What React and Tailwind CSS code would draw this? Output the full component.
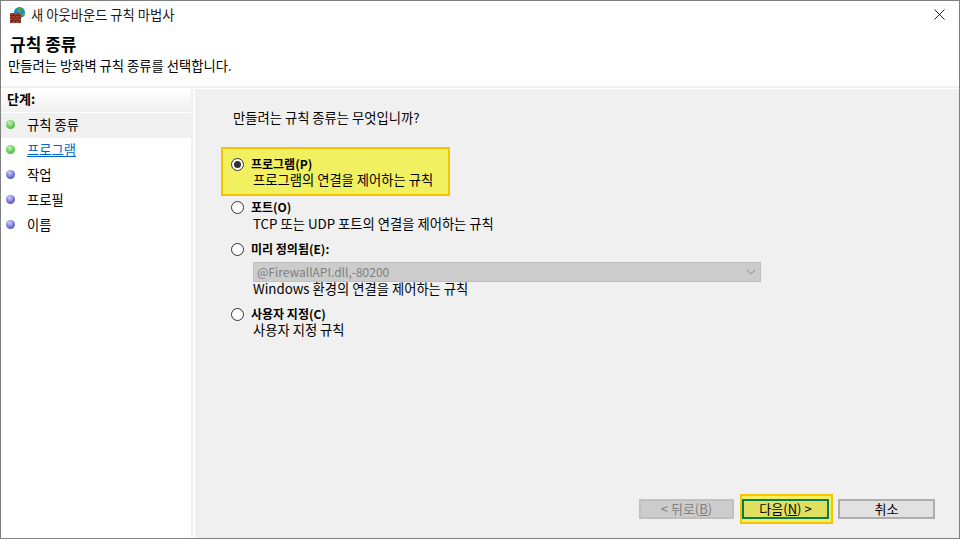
const font = { fontFamily: '"Noto Sans CJK KR", "Noto Sans", sans-serif' };

function FirewallIcon() {
  return (
    <svg width="16" height="16" viewBox="0 0 16 16" className="shrink-0">
      <circle cx="9.5" cy="5.5" r="5.5" fill="#2f7fd6" />
      <path d="M6.5 1.5 L10.5 0.5 L12.5 3 L10 6 L7.5 4.5 Z" fill="#3fae3a" />
      <path d="M12.5 6 L15 5 L14.5 9 L12.5 9.5 Z" fill="#3fae3a" />
      <rect x="0" y="6" width="11" height="10" fill="#a8432f" />
      <path d="M0 8.5 H11 M0 11 H11 M0 13.5 H11 M3.5 6 V8.5 M7.5 6 V8.5 M1.5 8.5 V11 M5.5 8.5 V11 M9.5 8.5 V11 M3.5 11 V13.5 M7.5 11 V13.5 M1.5 13.5 V16 M5.5 13.5 V16 M9.5 13.5 V16" stroke="#6e2a1d" strokeWidth="1" fill="none" />
    </svg>
  );
}

function StepDot({ done }) {
  return (
    <span
      className={
        done
          ? "h-[9px] w-[9px] shrink-0 rounded-full bg-[radial-gradient(circle_at_40%_30%,#c8f0c0,#5cc84a_60%,#48a83a)]"
          : "h-[9px] w-[9px] shrink-0 rounded-full bg-[radial-gradient(circle_at_40%_30%,#d0d0f4,#6868d0_60%,#5454b4)]"
      }
    />
  );
}

function Step({ label, done, active, link }) {
  return (
    <div className={`flex h-[25px] items-center pb-[2px] pl-[5px] ${active ? "bg-[#f0f0f0]" : ""}`}>
      <StepDot done={done} />
      <span className={`ml-[12px] text-[13.3px] ${link ? "text-[#0066cc] underline" : "text-black"}`}>{label}</span>
    </div>
  );
}

function Radio({ checked }) {
  return (
    <span className="flex h-[13px] w-[13px] shrink-0 items-center justify-center rounded-full border border-[#333] bg-white">
      {checked && <span className="h-[7px] w-[7px] rounded-full bg-[#333]" />}
    </span>
  );
}

function OptionLabel({ checked, children }) {
  return (
    <div className="flex h-[14px] items-center gap-[7px]">
      <Radio checked={checked} />
      <span className="text-[12px] font-bold leading-[14px] text-black">{children}</span>
    </div>
  );
}

function Button({ children, kind }) {
  if (kind === "next") {
    return (
      <div className="ml-[6px] flex h-[30px] w-[93px] items-center border-2 border-[#f5c400] bg-[#f0f060]">
        <button className="h-[20px] w-[87px] border-2 border-[#0a7a50] bg-[#e0e060] text-[13px] leading-[14px] text-black">
          {children}
        </button>
      </div>
    );
  }
  if (kind === "disabled") {
    return (
      <button className="h-[20px] w-[95px] border-2 border-[#c0c0c0] bg-[#cccccc] text-[13px] leading-[14px] text-[#808080]">
        {children}
      </button>
    );
  }
  return (
    <button className="ml-[5px] h-[20px] w-[97px] border-2 border-[#adadad] bg-[#e1e1e1] text-[13px] leading-[14px] text-black">
      {children}
    </button>
  );
}

export default function App() {
  return (
    <div
      className="flex h-[539px] w-[960px] flex-col overflow-hidden border border-[#808080] bg-white"
      style={font}
    >
      <div className="flex h-[29px] shrink-0 items-center pb-[2px] pl-[9px] pr-[14px]">
        <FirewallIcon />
        <span className="ml-[5px] text-[13.3px] text-[#1a1a1a]">새 아웃바운드 규칙 마법사</span>
        <svg width="11" height="11" viewBox="0 0 11 11" className="ml-auto">
          <path d="M0.5 0.5 L10.5 10.5 M10.5 0.5 L0.5 10.5" stroke="#222" strokeWidth="1" />
        </svg>
      </div>

      <div className="h-[56px] shrink-0 pl-[9px]">
        <div className="mt-[3px] text-[17px] font-bold leading-[22px] text-black">규칙 종류</div>
        <div className="-ml-[2px] mt-[3px] text-[13.3px] leading-[16px] text-black">만들려는 방화벽 규칙 종류를 선택합니다.</div>
      </div>

      <div className="flex min-h-0 flex-1 border-t-2 border-[#f0f0f0] pt-[1px]">
        <div className="w-[192px] shrink-0 border-r-2 border-[#f0f0f0]">
          <div className="flex h-[23px] items-center bg-gradient-to-b from-white to-[#f0f0f0] pb-[4px] pl-[6px] text-[13px] font-bold text-black">
            단계:
          </div>
          <div className="pt-[1px]">
            <Step label="규칙 종류" done active />
            <Step label="프로그램" done link />
            <Step label="작업" />
            <Step label="프로필" />
            <Step label="이름" />
          </div>
        </div>

        <div className="ml-[2px] flex min-w-0 flex-1 flex-col bg-[#f0f0f0] pl-[26px] pr-[24px]">
          <div className="ml-[12px] mt-[21px] text-[13.3px] leading-[16px] text-black">만들려는 규칙 종류는 무엇입니까?</div>

          <div className="mt-[21px] h-[49px] w-[229px] border-2 border-[#f5c400] bg-[#f0f060] pl-[8px] pt-[8px]">
            <OptionLabel checked>프로그램(P)</OptionLabel>
            <div className="ml-[22px] mt-[1px] text-[13.3px] leading-[16px] text-black">프로그램의 연결을 제어하는 규칙</div>
          </div>

          <div className="ml-[10px] mt-[4px]">
            <OptionLabel>포트(O)</OptionLabel>
            <div className="ml-[22px] mt-[2px] text-[13.3px] leading-[16px] text-black">TCP 또는 UDP 포트의 연결을 제어하는 규칙</div>
          </div>

          <div className="ml-[10px] mt-[10px]">
            <OptionLabel>미리 정의됨(E):</OptionLabel>
            <div className="ml-[22px] mt-[6px] flex h-[20px] w-[508px] items-center justify-between border border-[#bfbfbf] bg-[#cccccc] pl-[3px] pr-[4px] text-[12px] text-[#808080]">
              <span>@FirewallAPI.dll,-80200</span>
              <svg width="10" height="6" viewBox="0 0 10 6">
                <path d="M1 1 L5 5 L9 1" stroke="#a0a0a0" strokeWidth="1.2" fill="none" />
              </svg>
            </div>
            <div className="ml-[22px] text-[13.3px] leading-[14px] text-black">Windows 환경의 연결을 제어하는 규칙</div>
          </div>

          <div className="ml-[10px] mt-[11px]">
            <OptionLabel>사용자 지정(C)</OptionLabel>
            <div className="ml-[22px] mt-[1px] text-[13.3px] leading-[16px] text-black">사용자 지정 규칙</div>
          </div>

          <div className="mt-auto mb-[14px] flex items-center justify-end">
            <Button kind="disabled">
              &lt; 뒤로(<span className="underline">B</span>)
            </Button>
            <Button kind="next">
              다음(<span className="underline">N</span>) &gt;
            </Button>
            <Button>취소</Button>
          </div>
        </div>
      </div>
    </div>
  );
}
